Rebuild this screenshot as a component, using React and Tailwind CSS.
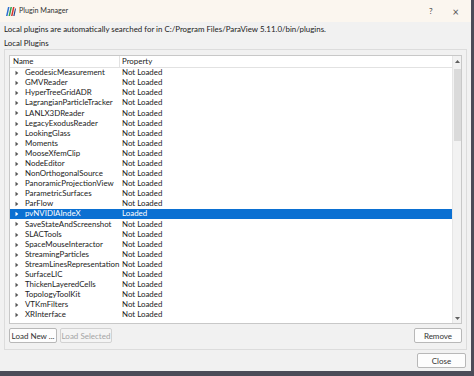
import React from "react";

const plugins = [
  ["GeodesicMeasurement", "Not Loaded"],
  ["GMVReader", "Not Loaded"],
  ["HyperTreeGridADR", "Not Loaded"],
  ["LagrangianParticleTracker", "Not Loaded"],
  ["LANLX3DReader", "Not Loaded"],
  ["LegacyExodusReader", "Not Loaded"],
  ["LookingGlass", "Not Loaded"],
  ["Moments", "Not Loaded"],
  ["MooseXfemClip", "Not Loaded"],
  ["NodeEditor", "Not Loaded"],
  ["NonOrthogonalSource", "Not Loaded"],
  ["PanoramicProjectionView", "Not Loaded"],
  ["ParametricSurfaces", "Not Loaded"],
  ["ParFlow", "Not Loaded"],
  ["pvNVIDIAIndeX", "Loaded"],
  ["SaveStateAndScreenshot", "Not Loaded"],
  ["SLACTools", "Not Loaded"],
  ["SpaceMouseInteractor", "Not Loaded"],
  ["StreamingParticles", "Not Loaded"],
  ["StreamLinesRepresentation", "Not Loaded"],
  ["SurfaceLIC", "Not Loaded"],
  ["ThickenLayeredCells", "Not Loaded"],
  ["TopologyToolKit", "Not Loaded"],
  ["VTKmFilters", "Not Loaded"],
  ["XRInterface", "Not Loaded"],
];

function Arrow({ white }) {
  return (
    <svg width="4" height="6" viewBox="0 0 4 6" className="shrink-0">
      <path d="M0.5 0.8 L3.3 3 L0.5 5.2 Z" fill={white ? "#ffffff" : "#555555"} />
    </svg>
  );
}

function Btn({ children, disabled, className = "" }) {
  return (
    <div
      className={
        "flex items-center justify-center h-[15px] border rounded-[2px] text-[8px] leading-none whitespace-nowrap " +
        (disabled
          ? "border-[#d2d2d2] bg-[#f4f4f4] text-[#a5a5a5] "
          : "border-[#b8b8b8] bg-[#fdfdfd] text-[#333333] ") +
        className
      }
    >
      {children}
    </div>
  );
}

export default function App() {
  return (
    <div
      className="w-[474px] h-[376px] bg-[#4c4c58] overflow-hidden"
      style={{ fontFamily: 'Lato, "Noto Sans", sans-serif' }}
    >
      <div className="w-[471px] h-[371px] bg-[#f1f1f1] flex flex-col text-[#222222]">
        {/* title bar */}
        <div className="h-[22px] bg-[#fbf6ef] flex items-center pl-[5px] pr-[12px] shrink-0">
          <svg width="11" height="9" viewBox="0 0 11 9" className="shrink-0">
            <path d="M1 9 L3 0 L4.5 0 L2.5 9 Z" fill="#2a6fd0" />
            <path d="M3.5 9 L5.5 0 L7 0 L5 9 Z" fill="#30a14e" />
            <path d="M6 9 L8 0 L9.5 0 L7.5 9 Z" fill="#d6312b" />
            <path d="M8.3 9 L10 1.5 L11 1.5 L9.5 9 Z" fill="#1d3f8a" />
          </svg>
          <span className="ml-[3px] text-[7.2px] text-[#333333]">Plugin Manager</span>
          <div className="flex-1" />
          <span className="text-[8px] text-[#444444]">?</span>
          <span className="ml-[20px] text-[11px] leading-none text-[#555555]">×</span>
        </div>

        {/* body */}
        <div className="flex-1 flex flex-col px-[4px]">
          <div className="mt-[1px] h-[12px] text-[7.9px] leading-[12px] text-[#222222] whitespace-nowrap">
            Local plugins are automatically searched for in C:/Program Files/ParaView 5.11.0/bin/plugins.
          </div>
          <div className="mt-[2px] h-[12px] text-[7.9px] leading-[12px] text-[#222222]">
            Local Plugins
          </div>

          {/* group box */}
          <div className="border border-[#dcdcdc] h-[301px] flex flex-col px-[4px] pt-[5px]">
            {/* table */}
            <div className="h-[269px] border border-[#c8c8c8] bg-white flex">
              <div className="flex-1 flex flex-col overflow-hidden">
                <div className="h-[12px] flex items-center border-b border-[#e2e2e2] text-[7.9px] text-[#222222] shrink-0">
                  <div className="w-[110px] pl-[3px] border-r border-[#e2e2e2] h-full flex items-center">
                    Name
                  </div>
                  <div className="pl-[2px] flex-1 h-full flex items-center">Property</div>
                </div>
                {plugins.map(([name, prop]) => {
                  const sel = prop === "Loaded";
                  return (
                    <div
                      key={name}
                      className={
                        "h-[10.1px] flex items-center text-[7.9px] whitespace-nowrap " +
                        (sel ? "bg-[#0b70d2] text-white" : "text-[#222222]")
                      }
                    >
                      <div className="w-[111px] flex items-center pl-[5px]">
                        <Arrow white={sel} />
                        <span className="ml-[6px]">{name}</span>
                      </div>
                      <div className="pl-[1px]">{prop}</div>
                    </div>
                  );
                })}
              </div>
              {/* scrollbar */}
              <div className="w-[9px] bg-[#f2f2f2] border-l border-[#e6e6e6] flex flex-col items-center">
                <div className="h-[11px] flex items-center justify-center">
                  <svg width="5" height="3" viewBox="0 0 5 3">
                    <path d="M0 3 L2.5 0 L5 3 Z" fill="#606060" />
                  </svg>
                </div>
                <div className="mt-[2px] w-[7px] h-[72px] bg-[#dadada]" />
                <div className="flex-1" />
                <div className="h-[9px] flex items-center justify-center">
                  <svg width="5" height="3" viewBox="0 0 5 3">
                    <path d="M0 0 L2.5 3 L5 0 Z" fill="#606060" />
                  </svg>
                </div>
              </div>
            </div>

            {/* buttons */}
            <div className="mt-[4px] flex items-center">
              <Btn className="w-[48px]">Load New ...</Btn>
              <Btn disabled className="ml-[3px] w-[52px]">Load Selected</Btn>
              <div className="flex-1" />
              <Btn className="w-[48px]">Remove</Btn>
            </div>
          </div>

          <div className="mt-[3px] flex justify-end pr-[1px]">
            <Btn className="w-[49px]">Close</Btn>
          </div>
        </div>
      </div>
    </div>
  );
}
